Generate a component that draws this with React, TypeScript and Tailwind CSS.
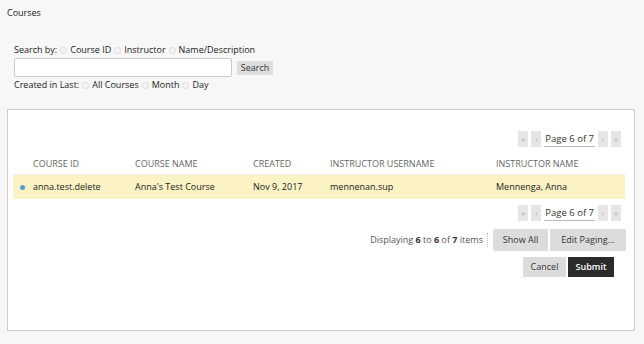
import React from "react";

function Radio() {
  return (
    <span className="inline-block w-[7px] h-[7px] rounded-full border border-[#dcdcdc] bg-[#f4f4f4] mx-[3px] align-middle" />
  );
}

function PBtn({ c }: { c: string }) {
  return (
    <span className="w-[10px] h-[16px] bg-[#e6e6e6] text-[#aaa] text-[8px] leading-[16px] text-center">{c}</span>
  );
}

function Pager() {
  return (
    <div className="flex justify-end items-center gap-[3px] pr-[13px]">
      <PBtn c="«" />
      <PBtn c="‹" />
      <span className="text-[9.5px] text-[#333] border-b border-[#bbb] leading-[15px] px-[1px]">Page 6 of 7</span>
      <PBtn c="›" />
      <PBtn c="»" />
    </div>
  );
}

export default function App() {
  return (
    <div className="w-[644px] h-[344px] bg-[#f7f7f7] text-[#222] text-[9px] overflow-hidden" style={{ fontFamily: '"Open Sans", sans-serif' }}>
      <div className="pl-[7px] pt-[6px] leading-[14px]">Courses</div>
      <div className="pl-[14px] pt-[23px]">
        <div className="leading-[14px] flex items-center">
          Search by:<Radio />Course ID<Radio />Instructor<Radio />Name/Description
        </div>
        <div className="flex items-center mt-[1px]">
          <div className="w-[218px] h-[19px] bg-white border border-[#ccc] rounded-[2px]" />
          <span className="ml-[5px] bg-[#dedede] w-[36px] text-center leading-[14px] text-[#333]">Search</span>
        </div>
        <div className="leading-[14px] flex items-center mt-[1px]">
          Created in Last:<Radio />All Courses<Radio />Month<Radio />Day
        </div>
      </div>
      <div className="ml-[7px] w-[628px] mt-[17px] h-[222px] bg-white border border-[#ccc]">
        <div className="pt-[21px]">
          <Pager />
        </div>
        <div className="ml-[5px] mr-[9px] mt-[7px]">
          <div className="flex h-[21px] items-center text-[#666] border-b border-[#eee]">
            <div className="pl-[20px] w-[122px]">COURSE ID</div>
            <div className="w-[118px]">COURSE NAME</div>
            <div className="w-[77px]">CREATED</div>
            <div className="w-[166px]">INSTRUCTOR USERNAME</div>
            <div>INSTRUCTOR NAME</div>
          </div>
          <div className="flex h-[24px] items-center bg-[#fbf3c4]">
            <div className="pl-[7px] w-[122px] flex items-center">
              <span className="w-[5px] h-[5px] rounded-full bg-[#5b9bd5] mr-[8px]" />
              anna.test.delete
            </div>
            <div className="w-[118px]">Anna's Test Course</div>
            <div className="w-[77px]">Nov 9, 2017</div>
            <div className="w-[166px]">mennenan.sup</div>
            <div>Mennenga, Anna</div>
          </div>
        </div>
        <div className="pt-[6px]">
          <Pager />
        </div>
        <div className="flex justify-end items-center pr-[8px] mt-[8px]">
          <span className="text-[#555] pr-[4px] mr-[5px] border-r border-dotted border-[#bbb] leading-[14px]">
            Displaying <b className="font-bold text-[#333]">6</b> to <b className="font-bold text-[#333]">6</b> of <b className="font-bold text-[#333]">7</b> items
          </span>
          <span className="bg-[#dcdcdc] h-[22px] leading-[22px] w-[55px] text-center text-[#333]">Show All</span>
          <span className="bg-[#dcdcdc] h-[22px] leading-[22px] w-[76px] text-center ml-[2px] text-[#333]">Edit Paging...</span>
        </div>
        <div className="flex justify-end items-center pr-[20px] mt-[6px]">
          <span className="bg-[#dcdcdc] h-[20px] leading-[20px] w-[43px] text-center text-[#333]">Cancel</span>
          <span className="bg-[#2b2b2b] h-[20px] leading-[20px] w-[46px] text-center ml-[2px] text-white font-semibold">Submit</span>
        </div>
      </div>
    </div>
  );
}
